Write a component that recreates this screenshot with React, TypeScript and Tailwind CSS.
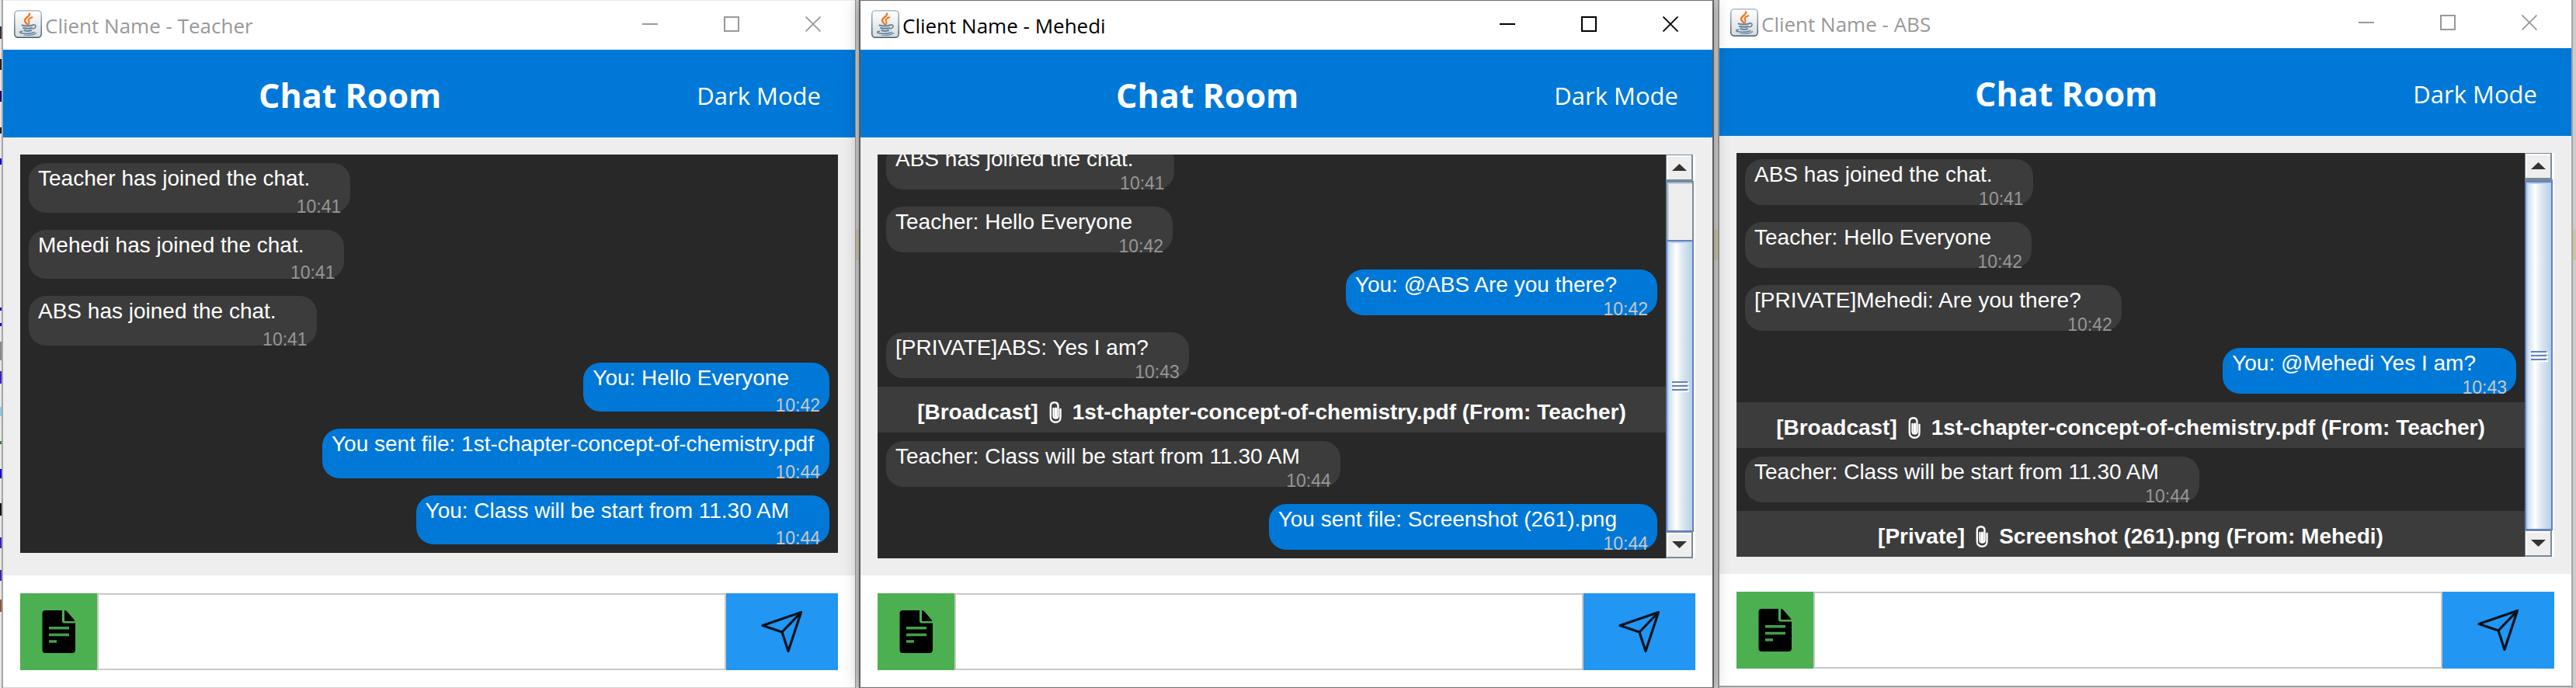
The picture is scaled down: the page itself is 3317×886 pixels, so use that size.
import React from "react";

type Message =
  | { kind: "in" | "out"; text: string; time: string }
  | { kind: "file"; scope: string; text: string };

type ChatWindow = {
  user: string;
  active?: boolean;
  frame: string;
  titleBar: string;
  scroll?: string;
  messages: Message[];
};

const windows: ChatWindow[] = [
  {
    user: "Teacher",
    frame: "border-t border-t-[#ececec]",
    titleBar: "h-[63px] pb-[3px]",
    messages: [
      { kind: "in", text: "Teacher has joined the chat.", time: "10:41" },
      { kind: "in", text: "Mehedi has joined the chat.", time: "10:41" },
      { kind: "in", text: "ABS has joined the chat.", time: "10:41" },
      { kind: "out", text: "You: Hello Everyone", time: "10:42" },
      { kind: "out", text: "You sent file: 1st-chapter-concept-of-chemistry.pdf", time: "10:44" },
      { kind: "out", text: "You: Class will be start from 11.30 AM", time: "10:44" },
    ],
  },
  {
    user: "Mehedi",
    active: true,
    frame: "border-y border-y-[#6e6e6e] z-10 shadow-[0_0_20px_rgba(0,0,0,0.35)]",
    titleBar: "h-[63px] pb-[3px]",
    scroll: "h-[76px]",
    messages: [
      { kind: "in", text: "ABS has joined the chat.", time: "10:41" },
      { kind: "in", text: "Teacher: Hello Everyone", time: "10:42" },
      { kind: "out", text: "You: @ABS Are you there?", time: "10:42" },
      { kind: "in", text: "[PRIVATE]ABS: Yes I am?", time: "10:43" },
      { kind: "file", scope: "[Broadcast]", text: "1st-chapter-concept-of-chemistry.pdf (From: Teacher)" },
      { kind: "in", text: "Teacher: Class will be start from 11.30 AM", time: "10:44" },
      { kind: "out", text: "You sent file: Screenshot (261).png", time: "10:44" },
    ],
  },
  {
    user: "ABS",
    frame: "border-b-2 border-b-[#a0a0a0]",
    titleBar: "h-[62px] pb-1",
    scroll: "h-[2px]",
    messages: [
      { kind: "in", text: "ABS has joined the chat.", time: "10:41" },
      { kind: "in", text: "Teacher: Hello Everyone", time: "10:42" },
      { kind: "in", text: "[PRIVATE]Mehedi: Are you there?", time: "10:42" },
      { kind: "out", text: "You: @Mehedi Yes I am?", time: "10:43" },
      { kind: "file", scope: "[Broadcast]", text: "1st-chapter-concept-of-chemistry.pdf (From: Teacher)" },
      { kind: "in", text: "Teacher: Class will be start from 11.30 AM", time: "10:44" },
      { kind: "file", scope: "[Private]", text: "Screenshot (261).png (From: Mehedi)" },
    ],
  },
];

function JavaIcon() {
  return (
    <svg className="size-9 shrink-0" viewBox="0 0 36 36" fill="none" aria-hidden="true">
      <defs>
        <linearGradient id="java-face" x1="0" y1="0" x2="0" y2="1">
          <stop offset="0" stopColor="#ffffff" />
          <stop offset="1" stopColor="#d8dadc" />
        </linearGradient>
        <linearGradient id="java-rim" x1="0" y1="0" x2="0" y2="1">
          <stop offset="0" stopColor="#a9bccb" />
          <stop offset="1" stopColor="#3c5f74" />
        </linearGradient>
      </defs>
      <rect x="0.75" y="0.75" width="34.5" height="34.5" rx="4.5" fill="url(#java-face)" stroke="url(#java-rim)" strokeWidth="1.5" />
      <g stroke="#ec7a26" strokeLinecap="round">
        <path d="M20 4.5c1.4 3.6-6.3 5-6.1 9 .1 2.100 2 3 3.300 5" strokeWidth="2.400" />
        <path d="M23.500 9.200c-3.500 1-5.300 2.700-4.800 4.600.4 1.400 1.700 2 .4 4.600" strokeWidth="2" />
      </g>
      <g stroke="#5f83a0" strokeLinecap="round">
        <path d="M10.500 19.500c4 1.300 10 1.200 14-.2" strokeWidth="2" />
        <path d="M25 19c4-.8 4.300 3.600-.6 5" strokeWidth="1.500" />
        <path d="M12 23c3.500 1 8 1 11.200 0" strokeWidth="2" />
        <path d="M13.200 26.200c2.800.9 6.200.9 9 0" strokeWidth="2" />
        <path d="M10.500 27.200c-4.500.8-3.300 2.400 1.500 2.800 5 .4 11 .1 14-1.500" strokeWidth="1.600" />
        <path d="M13 32c6 .6 13 0 15.500-2.500" strokeWidth="1.200" />
      </g>
    </svg>
  );
}

function DocumentIcon() {
  return (
    <svg className="h-[55px] w-[43px]" viewBox="0 0 43 55" aria-hidden="true">
      <path d="M4.500 0H26v13.500c0 2 1 3 3 3h14V51c0 2.500-1.500 4-4 4H4.500C2 55 .5 53.500 .5 51V4C.5 1.500 2 0 4.500 0Z" fill="#000" />
      <path d="M29 0c1.500 0 2.500.6 3.500 1.800L41 11.500c.8.900 1.200 1.500 1.200 2.500H30.500c-1 0-1.500-.5-1.500-1.500Z" fill="#000" />
      <path d="M9 22.800h26M9 31.500h26M9 40h10" stroke="#43a047" strokeWidth="3.400" />
    </svg>
  );
}

function SendIcon() {
  return (
    <svg className="h-[55px] w-[54px]" viewBox="0 0 54 55" fill="none" stroke="#07121d" strokeWidth="3.200" strokeLinejoin="round" aria-hidden="true">
      <path d="M2 19.500 51.500 2.500 35 52.500 27 28Z" />
      <path d="M27 28 51.500 2.500" />
    </svg>
  );
}

function PaperclipIcon() {
  return (
    <svg className="h-7 w-4 shrink-0" viewBox="0 0 16 28" fill="none" stroke="#fff" strokeLinecap="round" aria-hidden="true">
      <path d="M14.500 10v10.500c0 4-2.700 6.300-6.200 6.300s-6.500-2.300-6.500-6.300V6c0-3 2-4.800 4.900-4.800S11.500 3 11.500 6v12.500c0 1.900-1.200 3-3 3s-3-1.100-3-3V9" strokeWidth="2.400" />
      <path d="M8.500 9v10" strokeWidth="3" />
    </svg>
  );
}

function Bubble({ message, tall }: { message: Message; tall: boolean }) {
  if (message.kind === "file") {
    return (
      <div className="flex h-[59px] shrink-0 items-center justify-center bg-[#3c3c3c] pt-[6px] text-[28px] leading-[32px] font-bold whitespace-nowrap text-white">
        <span>{message.scope}</span>
        <span className="px-[14px]">
          <PaperclipIcon />
        </span>
        <span>{message.text}</span>
      </div>
    );
  }
  const mine = message.kind === "out";
  return (
    <div className={"flex px-[11px] py-[11px] " + (tall ? "flex-1 " : "h-[81px] shrink-0 ") + (mine ? "justify-end" : "justify-start")}>
      <div
        className={
          "flex max-w-[653px] flex-col justify-between rounded-[22px] pt-1 pr-13 pl-3 whitespace-nowrap " +
          (mine ? "bg-[#0078d7]" : "bg-[#3c3c3c]")
        }
      >
        <p className="text-[28px] leading-[32px] text-white">{message.text}</p>
        <time className={"-mr-10 -mb-[5px] self-end text-[23px] leading-[26px] " + (mine ? "text-[#c8c8c8]" : "text-[#969696]")}>
          {message.time}
        </time>
      </div>
    </div>
  );
}

function ScrollBar({ spacer }: { spacer: string }) {
  const button =
    "flex h-[34px] w-[35px] shrink-0 items-center justify-center border-t border-r-2 border-b-2 border-l border-[#7a8a99] bg-[#eeeeee] shadow-[inset_2px_2px_0_#fff,3px_0_0_#fff]";
  return (
    <div className="flex w-[38px] shrink-0 flex-col bg-[#eeeeee]">
      <button type="button" aria-label="Scroll up" className={button}>
        <svg className="h-[9px] w-[19px]" viewBox="0 0 19 9" aria-hidden="true">
          <path d="M0 9 9.500 0 19 9Z" fill="#333" />
        </svg>
      </button>
      <div className="flex min-h-0 flex-1 flex-col border-r-2 border-white">
        <div className={"shrink-0 border-x-2 border-t-2 border-[#7a8a99] shadow-[inset_2px_2px_0_#b8cfe5] " + spacer} />
        <div className="flex flex-1 flex-col items-center justify-center gap-[3px] border-2 border-[#6382bf] bg-[linear-gradient(90deg,#c4d8ec_0%,#ffffff_36%,#dfe9f4_58%,#b8cfe5_100%)] shadow-[inset_2px_2px_0_#b8cfe5]">
          <span className="h-[2px] w-5 bg-[#6382bf] shadow-[2px_2px_0_#fff]" />
          <span className="h-[2px] w-5 bg-[#6382bf] shadow-[2px_2px_0_#fff]" />
          <span className="h-[2px] w-5 bg-[#6382bf] shadow-[2px_2px_0_#fff]" />
        </div>
      </div>
      <button type="button" aria-label="Scroll down" className={button}>
        <svg className="h-[9px] w-[19px]" viewBox="0 0 19 9" aria-hidden="true">
          <path d="M0 0H19L9.500 9Z" fill="#333" />
        </svg>
      </button>
    </div>
  );
}

function WindowControls({ active }: { active?: boolean }) {
  const control = "flex h-full w-[105px] items-center justify-center";
  return (
    <div className={"flex h-full pr-[2px] " + (active ? "text-black" : "text-[#999999]")}>
      <button type="button" aria-label="Minimize" className={control}>
        <svg className="size-5" viewBox="0 0 20 20" stroke="currentColor" strokeWidth="2" aria-hidden="true">
          <path d="M0 10H20" />
        </svg>
      </button>
      <button type="button" aria-label="Maximize" className={control}>
        <svg className="size-5" viewBox="0 0 20 20" fill="none" stroke="currentColor" strokeWidth="2" aria-hidden="true">
          <path d="M1 1H19V19H1Z" />
        </svg>
      </button>
      <button type="button" aria-label="Close" className={control}>
        <svg className="size-5" viewBox="0 0 20 20" stroke="currentColor" strokeWidth="1.800" aria-hidden="true">
          <path d="M.5 .5 19.500 19.500M19.500 .5 .5 19.500" />
        </svg>
      </button>
    </div>
  );
}

function Window({ data }: { data: ChatWindow }) {
  const tall = !data.scroll;
  const inputId = "message-" + data.user;
  return (
    <section className={"relative flex min-w-0 flex-1 flex-col bg-white " + data.frame}>
      <div className={"flex shrink-0 items-center justify-between pl-[14px] font-['Open_Sans',sans-serif] " + data.titleBar}>
        <div className="flex items-center gap-1">
          <JavaIcon />
          <span className={"pt-1 text-[26px] leading-[32px] whitespace-nowrap " + (data.active ? "text-black" : "text-[#999999]")}>
            Client Name - {data.user}
          </span>
        </div>
        <WindowControls active={data.active} />
      </div>

      <header className="flex h-[113px] shrink-0 items-center bg-[#0078d7] pt-[5px] pr-11 font-['Open_Sans',sans-serif] whitespace-nowrap text-white">
        <h1 className="flex-1 text-center text-[43px] leading-[60px] font-bold">Chat Room</h1>
        <button type="button" className="text-[31px] leading-[40px]">
          Dark Mode
        </button>
      </header>

      <main className="flex min-h-0 flex-1 bg-[#eeeeee] p-[22px]">
        <div
          className={
            "flex min-w-0 flex-1 flex-col justify-end overflow-hidden bg-[#282828] font-['Liberation_Sans',Arial,sans-serif] " +
            (tall ? "mb-[7px]" : "")
          }
        >
          {data.messages.map((message, i) => (
            <Bubble key={i} message={message} tall={tall} />
          ))}
        </div>
        {data.scroll && <ScrollBar spacer={data.scroll} />}
      </main>

      <form className="flex h-[144px] shrink-0 px-[22px] pt-[23px] pb-[22px]" onSubmit={(e) => e.preventDefault()}>
        <button type="button" aria-label="Attach file" className="flex w-[99px] items-center justify-center bg-[#4caf50]">
          <DocumentIcon />
        </button>
        <label htmlFor={inputId} className="sr-only">
          Message
        </label>
        <input
          id={inputId}
          type="text"
          className="min-w-0 flex-1 border-2 border-[#c8c8c8] bg-white px-3 font-['Liberation_Sans',Arial,sans-serif] text-[28px] outline-none"
        />
        <button type="submit" aria-label="Send" className="flex w-36 items-center justify-center bg-[#2196f3]">
          <SendIcon />
        </button>
      </form>
    </section>
  );
}

function Gutter({ className }: { className: string }) {
  return (
    <div className={"flex shrink-0 flex-col bg-[#cccccc] " + className} aria-hidden="true">
      <span className="mt-[295px] h-10 bg-[#c9c3a8]" />
    </div>
  );
}

const edgeMarks = [
  "mt-[34px] h-4 bg-[#333333]",
  "mt-[26px] h-[14px] bg-[#222222]",
  "mt-[27px] h-[14px] bg-[#000080]",
  "mt-[33px] h-2 bg-[#222222]",
  "mt-8 h-2 bg-[#0000dd]",
  "mt-[184px] h-1 bg-[#0000dd]",
  "mt-4 h-1 bg-[#0000dd]",
  "mt-5 h-6 bg-[#888888]",
  "mt-[14px] h-4 bg-[#3a20c0]",
  "mt-[30px] h-3 bg-[#87ceeb]",
  "mt-8 h-1 bg-[#228b22]",
  "mt-8 h-3 bg-[#0000dd]",
  "mt-8 h-4 bg-[#111111]",
  "mt-7 h-[14px] bg-[#3a20c0]",
  "mt-7 h-[14px] bg-[#3a20c0]",
  "mt-6 h-4 bg-[#8b5a2b]",
];

export default function App() {
  return (
    <div className="flex h-screen overflow-hidden bg-[#d4d4d4]">
      <div className="flex w-1 shrink-0 flex-col border-r-2 border-[#a6a6a6] bg-[#e6e6e6]" aria-hidden="true">
        {edgeMarks.map((mark, i) => (
          <span key={i} className={"w-full shrink-0 " + mark} />
        ))}
      </div>
      <div className="flex min-w-0 flex-1 pb-[1px]">
        <Window data={windows[0]} />
      </div>
      <Gutter className="w-[7px] border-r-2 border-l border-r-[#6e6e6e] border-l-[#999999]" />
      <div className="flex min-w-0 flex-1">
        <Window data={windows[1]} />
      </div>
      <Gutter className="w-[9px] border-r-2 border-l-2 border-r-[#999999] border-l-[#6e6e6e]" />
      <div className="flex min-w-0 flex-1 pb-[1px]">
        <Window data={windows[2]} />
      </div>
      <Gutter className="w-[6px] border-l-2 border-[#a6a6a6]" />
    </div>
  );
}
